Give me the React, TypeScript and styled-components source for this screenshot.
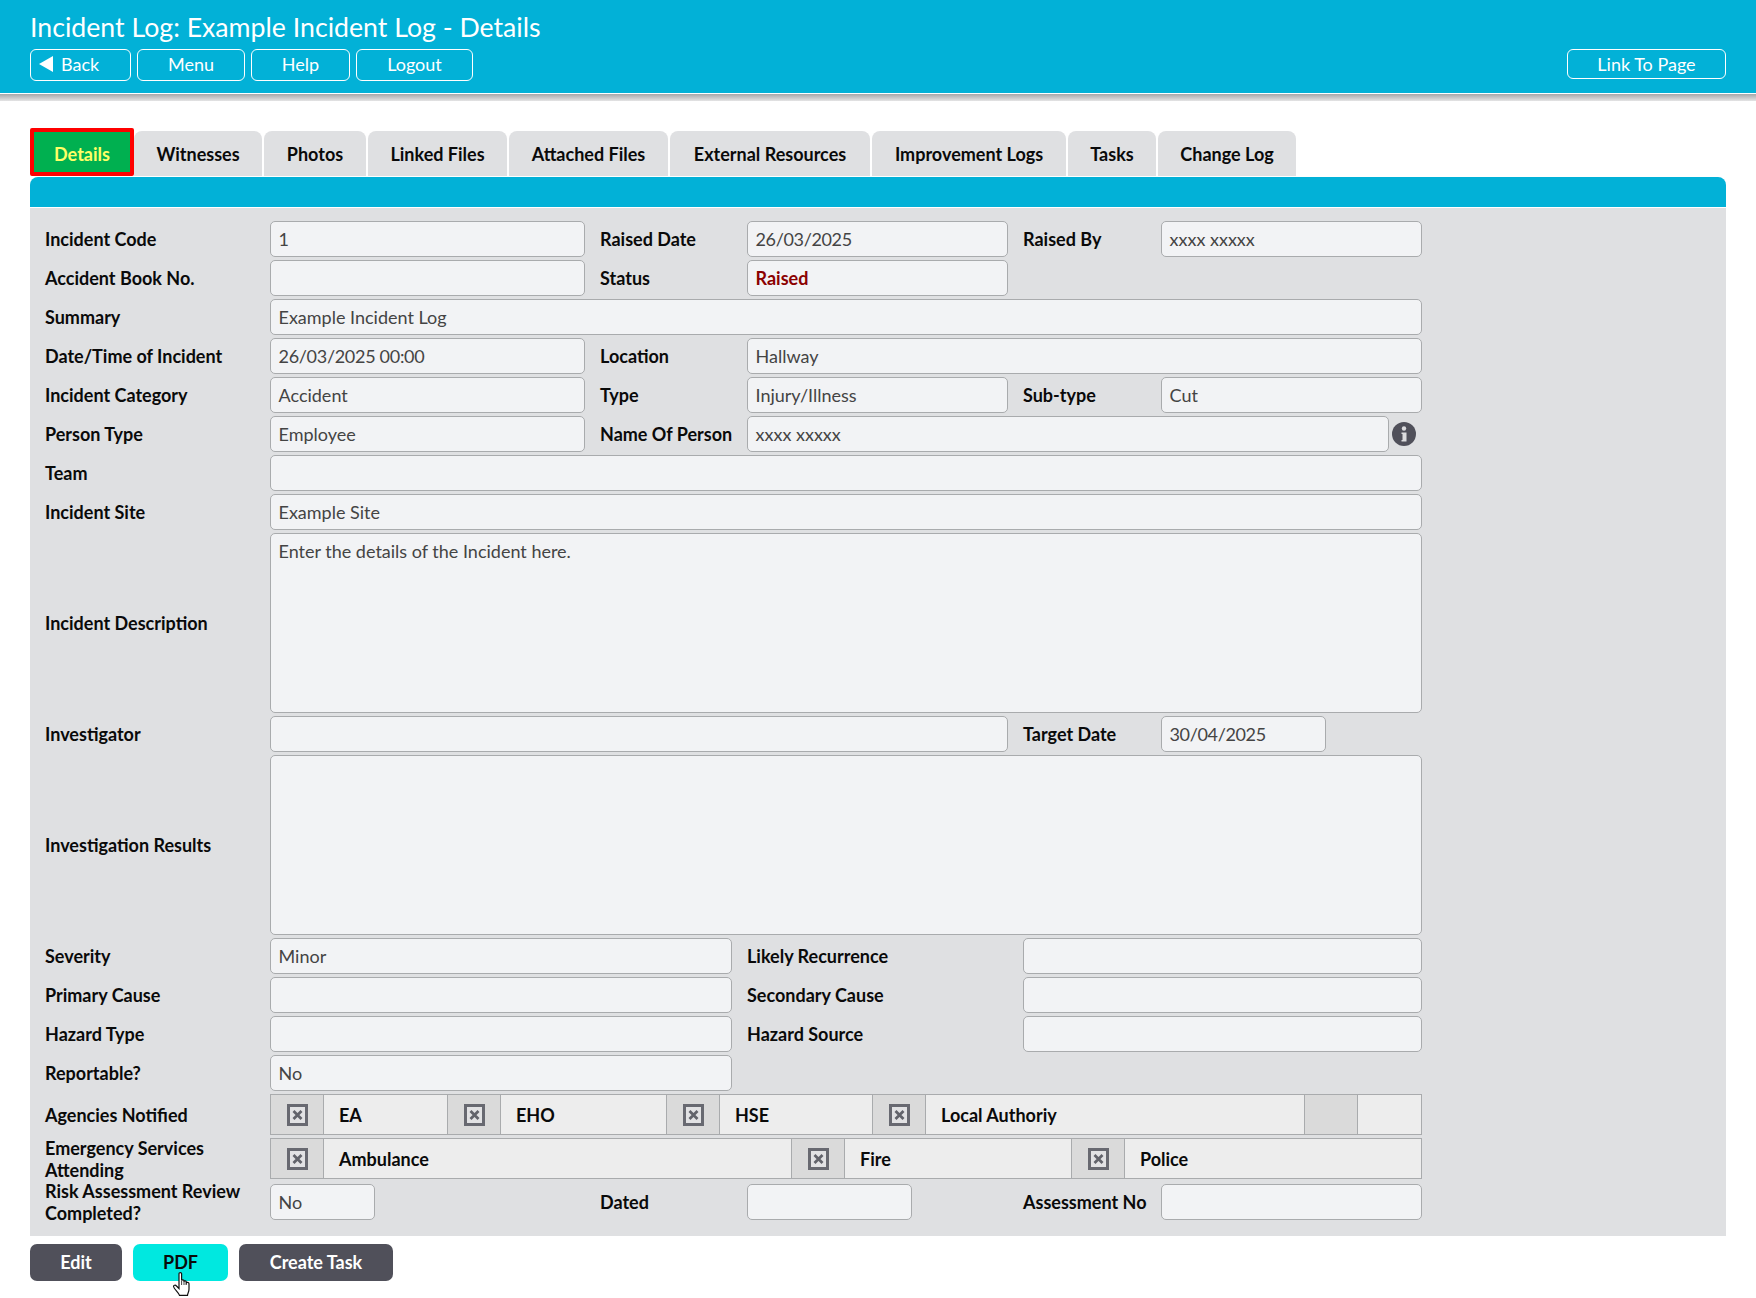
import * as React from 'react';
import styled, { createGlobalStyle } from 'styled-components';

const GlobalStyle = createGlobalStyle`
  html, body {
    margin: 0;
    padding: 0;
    background: #fff;
    font-family: Lato, "Open Sans", sans-serif;
  }
`;

const Page = styled.div`
  position: relative;
  width: 1756px;
  height: 1298px;
  overflow: hidden;
`;

const Header = styled.header`
  height: 94px;
  box-sizing: border-box;
  padding: 11px 30px 0;
  background: #02b1d7;
  border-bottom: 1px solid #fff;
`;

const HeaderShadow = styled.div`
  height: 7px;
  background: linear-gradient(#a6a7a9, #e4e4e5);
`;

const Title = styled.h1`
  margin: 0 0 5px;
  font-size: 26.7px;
  line-height: 33px;
  font-weight: 400;
  color: #fff;
`;

const HeaderBar = styled.div`
  display: flex;
  justify-content: space-between;
  align-items: flex-start;
`;

const HeaderButtons = styled.div`
  display: flex;
  gap: 6px;
`;

const HeaderButton = styled.div<{ $w: number; $h?: number; $start?: boolean }>`
  display: flex;
  align-items: center;
  justify-content: ${(p) => (p.$start ? 'flex-start' : 'center')};
  gap: 8px;
  box-sizing: border-box;
  width: ${(p) => p.$w}px;
  height: ${(p) => p.$h ?? 32}px;
  padding: 0 ${(p) => (p.$start ? 8 : 0)}px ${(p) => (p.$h ? 0 : 2)}px;
  border: 1px solid #fff;
  border-radius: 6px;
  color: #fff;
  font-size: 18px;
`;

const BackArrow = styled.span`
  width: 0;
  height: 0;
  border-style: solid;
  border-width: 8.5px 14px 8.5px 0;
  border-color: transparent #fff transparent transparent;
`;

const Main = styled.main`
  padding: 27px 30px 0;
`;

const Tabs = styled.nav`
  display: flex;
  align-items: flex-end;
  gap: 2px;
  height: 48px;
`;

const Tab = styled.div<{ $w: number; $active?: boolean }>`
  flex: none;
  display: flex;
  align-items: center;
  justify-content: center;
  box-sizing: border-box;
  width: ${(p) => p.$w}px;
  height: ${(p) => (p.$active ? 48 : 45)}px;
  margin-right: ${(p) => (p.$active ? -2 : 0)}px;
  padding-top: ${(p) => (p.$active ? 3 : 0)}px;
  font-size: 18px;
  font-weight: 700;
  color: ${(p) => (p.$active ? '#ffff66' : '#0a0a0a')};
  background: ${(p) => (p.$active ? '#00b050' : '#dfe0e2')};
  border: ${(p) => (p.$active ? '4px solid #f00' : 'none')};
  border-radius: ${(p) => (p.$active ? '2px' : '8px 8px 0 0')};
`;

const Band = styled.div`
  height: 31px;
  box-sizing: border-box;
  margin-top: 1px;
  background: #02b1d7;
  border-radius: 8px 8px 0 0;
  border-bottom: 1px solid #fff;
`;

const Panel = styled.section`
  height: 1028px;
  box-sizing: border-box;
  padding: 13px 0 0 15px;
  background: #dfe0e2;
`;

const Row = styled.div<{ $mb?: number }>`
  display: flex;
  align-items: center;
  width: 1377px;
  margin-bottom: ${(p) => p.$mb ?? 3}px;
`;

const Label = styled.label<{ $w: number; $ml?: number }>`
  flex: none;
  width: ${(p) => p.$w}px;
  margin: -6px 0 -6px ${(p) => p.$ml ?? 0}px;
  font-size: 18px;
  line-height: 22px;
  font-weight: 700;
  color: #0a0a0a;
`;

const Field = styled.div<{
  $w?: number;
  $h?: number;
  $tall?: boolean;
  $alert?: boolean;
  $tight?: number;
}>`
  ${(p) => (p.$w ? `flex: none; width: ${p.$w}px;` : 'flex: 1;')}
  box-sizing: border-box;
  height: ${(p) => p.$h ?? 36}px;
  padding: ${(p) => (p.$tall ? '6px' : '0')} 8px 0 7.5px;
  ${(p) => !p.$tall && 'display: flex; align-items: center;'}
  background: #f2f3f5;
  border: 1px solid #a9abad;
  border-radius: 5px;
  font-size: 18px;
  line-height: 22px;
  letter-spacing: ${(p) => p.$tight ?? 0}px;
  font-weight: ${(p) => (p.$alert ? 700 : 400)};
  color: ${(p) => (p.$alert ? '#8b0000' : '#444')};
`;

const Checks = styled.div`
  flex: 1;
  display: flex;
  box-sizing: border-box;
  height: 41px;
  border: 1px solid #a9abad;
  background: #ededed;
`;

const CheckCell = styled.div`
  flex: none;
  display: flex;
  align-items: center;
  justify-content: center;
  box-sizing: border-box;
  width: 53px;
  background: #dadada;
  border-right: 1px solid #a9abad;
`;

const CheckText = styled.div<{ $w?: number }>`
  ${(p) => (p.$w ? `flex: none; width: ${p.$w}px;` : 'flex: 1;')}
  display: flex;
  align-items: center;
  box-sizing: border-box;
  padding-left: 15px;
  border-right: 1px solid #a9abad;
  font-size: 18px;
  font-weight: 700;
  color: #0a0a0a;
  &:last-child {
    border-right: none;
  }
`;

const CheckIcon = styled.svg`
  width: 21px;
  height: 22px;
  filter: blur(0.4px);
`;

const Actions = styled.div`
  display: flex;
  gap: 11px;
  padding-top: 8px;
`;

const ActionButton = styled.div<{ $w: number; $cyan?: boolean }>`
  display: flex;
  align-items: center;
  justify-content: center;
  box-sizing: border-box;
  width: ${(p) => p.$w}px;
  height: 37px;
  padding-bottom: 2px;
  border-radius: 7px;
  font-size: 18px;
  font-weight: 700;
  color: ${(p) => (p.$cyan ? '#0a0a0a' : '#fff')};
  background: ${(p) => (p.$cyan ? '#00e8e0' : '#50505a')};
`;

const InfoButton = styled.svg`
  flex: none;
  width: 24px;
  height: 24px;
  margin: 0 6px 0 3px;
`;

const Cursor = styled.svg`
  position: absolute;
  left: 172px;
  top: 1272px;
  width: 20px;
  height: 24px;
`;

const CrossBox = () => (
  <CheckIcon viewBox="0 0 21 22">
    <rect x="1.500" y="1.500" width="18" height="19" fill="#e2e2e4" stroke="#686971" strokeWidth="3" />
    <path d="M6.500 7 14.500 15M14.500 7 6.500 15" stroke="#62636b" strokeWidth="2.800" />
  </CheckIcon>
);

const Info = () => (
  <InfoButton viewBox="0 0 24 24">
    <circle cx="12" cy="12" r="12" fill="#50505a" />
    <circle cx="12" cy="6.500" r="2.200" fill="#dcdcde" />
    <path d="M9.500 10.500H14.500V19.500H9.500V18H10.500V12H9.500Z" fill="#dcdcde" />
  </InfoButton>
);

const tabs: { name: string; w: number }[] = [
  { name: 'Witnesses', w: 128 },
  { name: 'Photos', w: 102 },
  { name: 'Linked Files', w: 139 },
  { name: 'Attached Files', w: 159 },
  { name: 'External Resources', w: 200 },
  { name: 'Improvement Logs', w: 194 },
  { name: 'Tasks', w: 88 },
  { name: 'Change Log', w: 138 }
];

export default function App() {
  return (
    <Page>
      <GlobalStyle />
      <Header>
        <Title>Incident Log: Example Incident Log - Details</Title>
        <HeaderBar>
          <HeaderButtons>
            <HeaderButton $w={101} $start>
              <BackArrow />
              Back
            </HeaderButton>
            <HeaderButton $w={108}>Menu</HeaderButton>
            <HeaderButton $w={99}>Help</HeaderButton>
            <HeaderButton $w={117}>Logout</HeaderButton>
          </HeaderButtons>
          <HeaderButton $w={159} $h={30}>
            Link To Page
          </HeaderButton>
        </HeaderBar>
      </Header>
      <HeaderShadow />
      <Main>
        <Tabs>
          <Tab $w={104} $active>
            Details
          </Tab>
          {tabs.map((t) => (
            <Tab key={t.name} $w={t.w}>
              {t.name}
            </Tab>
          ))}
        </Tabs>
        <Band />
        <Panel>
          <Row>
            <Label $w={225}>Incident Code</Label>
            <Field $w={315}>1</Field>
            <Label $w={147} $ml={15}>Raised Date</Label>
            <Field $w={261} $tight={-0.35}>26/03/2025</Field>
            <Label $w={138} $ml={15}>Raised By</Label>
            <Field>xxxx xxxxx</Field>
          </Row>
          <Row>
            <Label $w={225}>Accident Book No.</Label>
            <Field $w={315} />
            <Label $w={147} $ml={15}>Status</Label>
            <Field $w={261} $alert>
              Raised
            </Field>
          </Row>
          <Row>
            <Label $w={225}>Summary</Label>
            <Field>Example Incident Log</Field>
          </Row>
          <Row>
            <Label $w={225}>Date/Time of Incident</Label>
            <Field $w={315} $tight={-0.3}>26/03/2025 00:00</Field>
            <Label $w={147} $ml={15}>Location</Label>
            <Field>Hallway</Field>
          </Row>
          <Row>
            <Label $w={225}>Incident Category</Label>
            <Field $w={315}>Accident</Field>
            <Label $w={147} $ml={15}>Type</Label>
            <Field $w={261}>Injury/Illness</Field>
            <Label $w={138} $ml={15}>Sub-type</Label>
            <Field>Cut</Field>
          </Row>
          <Row>
            <Label $w={225}>Person Type</Label>
            <Field $w={315}>Employee</Field>
            <Label $w={147} $ml={15}>Name Of Person</Label>
            <Field>xxxx xxxxx</Field>
            <Info />
          </Row>
          <Row>
            <Label $w={225}>Team</Label>
            <Field />
          </Row>
          <Row>
            <Label $w={225}>Incident Site</Label>
            <Field>Example Site</Field>
          </Row>
          <Row>
            <Label $w={225}>Incident Description</Label>
            <Field $h={180} $tall>
              Enter the details of the Incident here.
            </Field>
          </Row>
          <Row>
            <Label $w={225}>Investigator</Label>
            <Field $w={738} />
            <Label $w={138} $ml={15}>Target Date</Label>
            <Field $w={165} $tight={-0.35}>30/04/2025</Field>
          </Row>
          <Row>
            <Label $w={225}>Investigation Results</Label>
            <Field $h={180} $tall />
          </Row>
          <Row>
            <Label $w={225}>Severity</Label>
            <Field $w={462}>Minor</Field>
            <Label $w={276} $ml={15}>Likely Recurrence</Label>
            <Field />
          </Row>
          <Row>
            <Label $w={225}>Primary Cause</Label>
            <Field $w={462} />
            <Label $w={276} $ml={15}>Secondary Cause</Label>
            <Field />
          </Row>
          <Row>
            <Label $w={225}>Hazard Type</Label>
            <Field $w={462} />
            <Label $w={276} $ml={15}>Hazard Source</Label>
            <Field />
          </Row>
          <Row>
            <Label $w={225}>Reportable?</Label>
            <Field $w={462}>No</Field>
          </Row>
          <Row>
            <Label $w={225}>Agencies Notified</Label>
            <Checks>
              <CheckCell>
                <CrossBox />
              </CheckCell>
              <CheckText $w={124}>EA</CheckText>
              <CheckCell>
                <CrossBox />
              </CheckCell>
              <CheckText $w={166}>EHO</CheckText>
              <CheckCell>
                <CrossBox />
              </CheckCell>
              <CheckText $w={153}>HSE</CheckText>
              <CheckCell>
                <CrossBox />
              </CheckCell>
              <CheckText $w={379}>Local Authoriy</CheckText>
              <CheckCell />
              <CheckText />
            </Checks>
          </Row>
          <Row $mb={5}>
            <Label $w={225}>
              Emergency Services
              <br />
              Attending
            </Label>
            <Checks>
              <CheckCell>
                <CrossBox />
              </CheckCell>
              <CheckText $w={468}>Ambulance</CheckText>
              <CheckCell>
                <CrossBox />
              </CheckCell>
              <CheckText $w={227}>Fire</CheckText>
              <CheckCell>
                <CrossBox />
              </CheckCell>
              <CheckText>Police</CheckText>
            </Checks>
          </Row>
          <Row>
            <Label $w={225}>
              Risk Assessment Review
              <br />
              Completed?
            </Label>
            <Field $w={105}>No</Field>
            <Label $w={147} $ml={225}>Dated</Label>
            <Field $w={165} />
            <Label $w={138} $ml={111}>Assessment No</Label>
            <Field />
          </Row>
        </Panel>
        <Actions>
          <ActionButton $w={92}>Edit</ActionButton>
          <ActionButton $w={95} $cyan>
            PDF
          </ActionButton>
          <ActionButton $w={154}>Create Task</ActionButton>
        </Actions>
      </Main>
      <Cursor viewBox="0 0 20 24">
        <path
          d="M7 1.500C7 .3 9.600 .3 9.600 1.500V8.500C10 7.500 12 7.500 12 8.800V9.500C12.400 8.700 14.300 8.700 14.300 10V10.800C14.800 10 17 10.300 17 11.800V17C17 20 15.500 21.500 15.500 23.300H7.500C7 21 2 17 1.500 14.500C1.500 13 3.500 12.800 4.500 14L7 16.500Z"
          fill="#fff"
          stroke="#111"
          strokeWidth="1.200"
        />
        <path d="M9.600 9V13M12 9V13M14.300 10V13" stroke="#111" strokeWidth=".8" fill="none" />
      </Cursor>
    </Page>
  );
}
